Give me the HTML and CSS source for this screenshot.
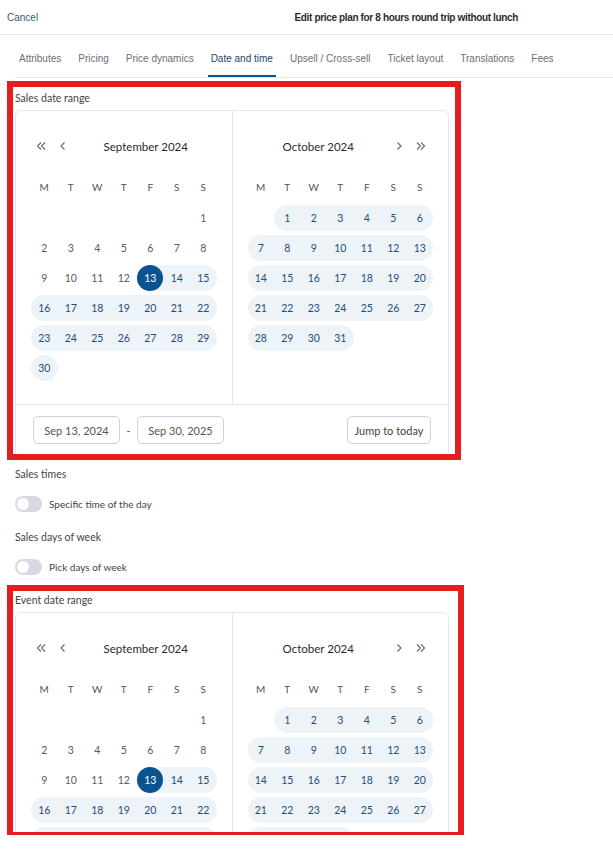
FILE: index.html
```html
<!DOCTYPE html>
<html lang="en">
<head>
    <meta charset="UTF-8">
    <title>Edit price plan</title>
    <meta name="viewport" content="width=device-width, initial-scale=1.0">
    <link rel="stylesheet" href="styles.css">
</head>
<body>
    <header class="topbar">
        <a class="cancel" href="#">Cancel</a>
        <div class="title">Edit price plan for 8 hours round trip without lunch</div>
    </header>
    <nav class="tabs">
        <span class="tab">Attributes</span>
        <span class="tab">Pricing</span>
        <span class="tab">Price dynamics</span>
        <span class="tab active">Date and time</span>
        <span class="tab">Upsell / Cross-sell</span>
        <span class="tab">Ticket layout</span>
        <span class="tab">Translations</span>
        <span class="tab">Fees</span>
    </nav>

    <main class="content">
        <section class="field field-sales marked">
            <div class="field-label">Sales date range</div>
            <div class="picker">
                <div class="months">
                    <div class="month">
                        <div class="month-head">
                            <div class="nav">
                                <button class="nav-btn"><svg width="10" height="10" viewBox="0 0 10 10"><path d="M5 1.5L1.5 5 5 8.5M9 1.5L5.5 5 9 8.5"/></svg></button>
                                <button class="nav-btn"><svg width="6" height="10" viewBox="0 0 6 10"><path d="M4.5 1.5L1 5l3.5 3.5"/></svg></button>
                            </div>
                            <div class="month-title">September 2024</div>
                        </div>
                        <div class="weekdays"></div>
                        <div class="days" data-offset="6" data-count="30" data-from="13" data-to="30" data-sel="13"></div>
                    </div>
                    <div class="month">
                        <div class="month-head">
                            <div class="month-title">October 2024</div>
                            <div class="nav">
                                <button class="nav-btn"><svg width="6" height="10" viewBox="0 0 6 10"><path d="M1.5 1.5L5 5 1.5 8.5"/></svg></button>
                                <button class="nav-btn"><svg width="10" height="10" viewBox="0 0 10 10"><path d="M1 1.5L4.5 5 1 8.5M5 1.5L8.5 5 5 8.5"/></svg></button>
                            </div>
                        </div>
                        <div class="weekdays"></div>
                        <div class="days" data-offset="1" data-count="31" data-from="1" data-to="31"></div>
                    </div>
                </div>
                <div class="picker-foot">
                    <span class="date-box">Sep 13, 2024</span>
                    <span class="dash">-</span>
                    <span class="date-box">Sep 30, 2025</span>
                    <button class="today-btn">Jump to today</button>
                </div>
            </div>
        </section>

        <section class="field field-toggle first-toggle">
            <div class="field-label">Sales times</div>
            <label class="switch-row"><span class="switch"></span>Specific time of the day</label>
        </section>

        <section class="field field-toggle">
            <div class="field-label">Sales days of week</div>
            <label class="switch-row"><span class="switch"></span>Pick days of week</label>
        </section>

        <section class="field field-event marked">
            <div class="clip">
                <div class="field-label">Event date range</div>
                <div class="picker">
                    <div class="months">
                        <div class="month">
                            <div class="month-head">
                                <div class="nav">
                                    <button class="nav-btn"><svg width="10" height="10" viewBox="0 0 10 10"><path d="M5 1.5L1.5 5 5 8.5M9 1.5L5.5 5 9 8.5"/></svg></button>
                                    <button class="nav-btn"><svg width="6" height="10" viewBox="0 0 6 10"><path d="M4.5 1.5L1 5l3.5 3.5"/></svg></button>
                                </div>
                                <div class="month-title">September 2024</div>
                            </div>
                            <div class="weekdays"></div>
                            <div class="days" data-offset="6" data-count="30" data-from="13" data-to="30" data-sel="13"></div>
                        </div>
                        <div class="month">
                            <div class="month-head">
                                <div class="month-title">October 2024</div>
                                <div class="nav">
                                    <button class="nav-btn"><svg width="6" height="10" viewBox="0 0 6 10"><path d="M1.5 1.5L5 5 1.5 8.5"/></svg></button>
                                    <button class="nav-btn"><svg width="10" height="10" viewBox="0 0 10 10"><path d="M1 1.5L4.5 5 1 8.5M5 1.5L8.5 5 5 8.5"/></svg></button>
                                </div>
                            </div>
                            <div class="weekdays"></div>
                            <div class="days" data-offset="1" data-count="31" data-from="1" data-to="31"></div>
                        </div>
                    </div>
                </div>
            </div>
        </section>
    </main>

    <script>
        // weekday header row
        document.querySelectorAll('.weekdays').forEach(function(el) {
            el.innerHTML = ['M', 'T', 'W', 'T', 'F', 'S', 'S'].map(w => `<span>${w}</span>`).join('');
        });
        // day cells, range pills break at week edges
        document.querySelectorAll('.days').forEach(function(el) {
            const offset = +el.dataset.offset;
            const count = +el.dataset.count;
            const from = +el.dataset.from;
            const to = +el.dataset.to;
            const sel = +el.dataset.sel || 0;
            let html = '';
            for (let i = 0; i < offset; i++) html += '<span class="day"></span>';
            for (let d = 1; d <= count; d++) {
                const col = (offset + d - 1) % 7;
                let cls = 'day';
                if (d >= from && d <= to) {
                    cls += ' in';
                    if (col === 0 || d === from) cls += ' first';
                    if (col === 6 || d === to) cls += ' last';
                }
                if (d === sel) cls += ' sel';
                html += `<span class="${cls}"><b>${d}</b></span>`;
            }
            el.innerHTML = html;
        });
    </script>
</body>
</html>
```

FILE: styles.css
```css
html, body {
    margin: 0;
    padding: 0;
    background: #fff;
}
body {
    font-family: 'Liberation Sans', Arial, sans-serif;
    color: #333;
}
.topbar {
    display: flex;
    align-items: center;
    height: 34px;
    padding: 0 7px;
    border-bottom: 1px solid #e3e6ea;
    font-size: 10px;
}
.cancel {
    color: #2f5c7c;
    text-decoration: none;
}
.title {
    margin-left: auto;
    margin-right: 88px;
    font-weight: bold;
    font-size: 10px;
    letter-spacing: -0.35px;
    color: #2d2d2d;
}
.tabs {
    display: flex;
    gap: 11px;
    margin-left: 15px;
    padding-left: 1px;
    border-bottom: 1px solid #e3e6ea;
}
.tab {
    padding: 17px 3px 11px 3px;
    font-size: 10px;
    line-height: 14px;
    color: #6b6f75;
}
.tab.active {
    color: #24466a;
    box-shadow: inset 0 -2px 0 #0b5394;
}

.content {
    padding: 0 15px;
    font-family: 'Lato', 'Open Sans', sans-serif;
}
.field {
    position: relative;
    width: 434px;
}
.field-label {
    font-size: 10.5px;
    line-height: 14px;
    color: #444;
}
.marked::after {
    content: "";
    position: absolute;
    border: 6px solid #e41e1e;
    pointer-events: none;
}
.field-sales {
    margin-top: 13px;
}
.field-sales::after {
    top: -10px;
    left: -8px;
    right: -12px;
    bottom: -3px;
}
.field-event {
    margin-top: 18px;
}
.field-event::after {
    top: -8px;
    left: -8px;
    right: -15px;
    bottom: -3px;
}
.field-event .clip {
    height: 242px;
    overflow: hidden;
}

/* date range picker */
.picker {
    margin-top: 5px;
    border: 1px solid #e4e7eb;
    border-radius: 6px;
    background: #fff;
}
.months {
    display: flex;
}
.month {
    flex: 1;
    padding: 23px 15px 23px 15px;
}
.month + .month {
    border-left: 1px solid #e4e7eb;
}
.month-head {
    display: flex;
    align-items: center;
    height: 24px;
}
.month-title {
    flex: 1;
    text-align: center;
    font-size: 11.5px;
    color: #2b2b2b;
}
.nav {
    display: flex;
    width: 44px;
}
.nav-btn {
    width: 20px;
    height: 20px;
    padding: 0;
    border: none;
    background: none;
    display: flex;
    align-items: center;
    justify-content: center;
}
.nav-btn + .nav-btn {
    margin-left: 2px;
}
.nav-btn path {
    fill: none;
    stroke: #6a6d72;
    stroke-width: 1.2;
}
.weekdays {
    display: grid;
    grid-template-columns: repeat(7, 1fr);
    margin-top: 22px;
    height: 14px;
    font-size: 10px;
    line-height: 14px;
    color: #555;
    text-align: center;
}
.days {
    display: grid;
    grid-template-columns: repeat(7, 1fr);
    grid-auto-rows: 26px;
    row-gap: 4px;
    margin-top: 11px;
    font-size: 10.5px;
    color: #5a5d62;
}
.day b {
    display: flex;
    align-items: center;
    justify-content: center;
    height: 100%;
    font-weight: normal;
}
.day.in {
    background: #eef3f7;
    color: #1d4e7c;
}
.day.first {
    border-radius: 13px 0 0 13px;
}
.day.last {
    border-radius: 0 13px 13px 0;
}
.day.first.last {
    border-radius: 13px;
}
.day.sel b {
    width: 26px;
    margin: 0 auto;
    border-radius: 50%;
    background: #0a5391;
    color: #fff;
}

.picker-foot {
    display: flex;
    align-items: center;
    padding: 11px 17px 12px 17px;
    border-top: 1px solid #e4e7eb;
}
.date-box, .today-btn {
    box-sizing: border-box;
    height: 28px;
    display: flex;
    align-items: center;
    justify-content: center;
    border: 1px solid #ccd0d8;
    border-radius: 5px;
    background: #fff;
    font-family: 'Lato', 'Open Sans', sans-serif;
    font-size: 11px;
    color: #555;
}
.date-box {
    width: 87px;
}
.dash {
    width: 17px;
    text-align: center;
    font-size: 11px;
    color: #555;
}
.today-btn {
    margin-left: auto;
    width: 84px;
    padding: 0;
    color: #444;
}

/* toggles */
.first-toggle {
    margin-top: 10px;
}
.field-toggle + .field-toggle {
    margin-top: 18px;
}
.switch-row {
    display: flex;
    align-items: center;
    gap: 7px;
    margin-top: 15px;
    height: 16px;
    font-size: 10px;
    color: #444;
}
.switch {
    position: relative;
    width: 27px;
    height: 16px;
    border-radius: 8px;
    background: #d6dae0;
}
.switch::before {
    content: "";
    position: absolute;
    top: 2px;
    left: 2px;
    width: 12px;
    height: 12px;
    border-radius: 50%;
    background: #fff;
}
```
